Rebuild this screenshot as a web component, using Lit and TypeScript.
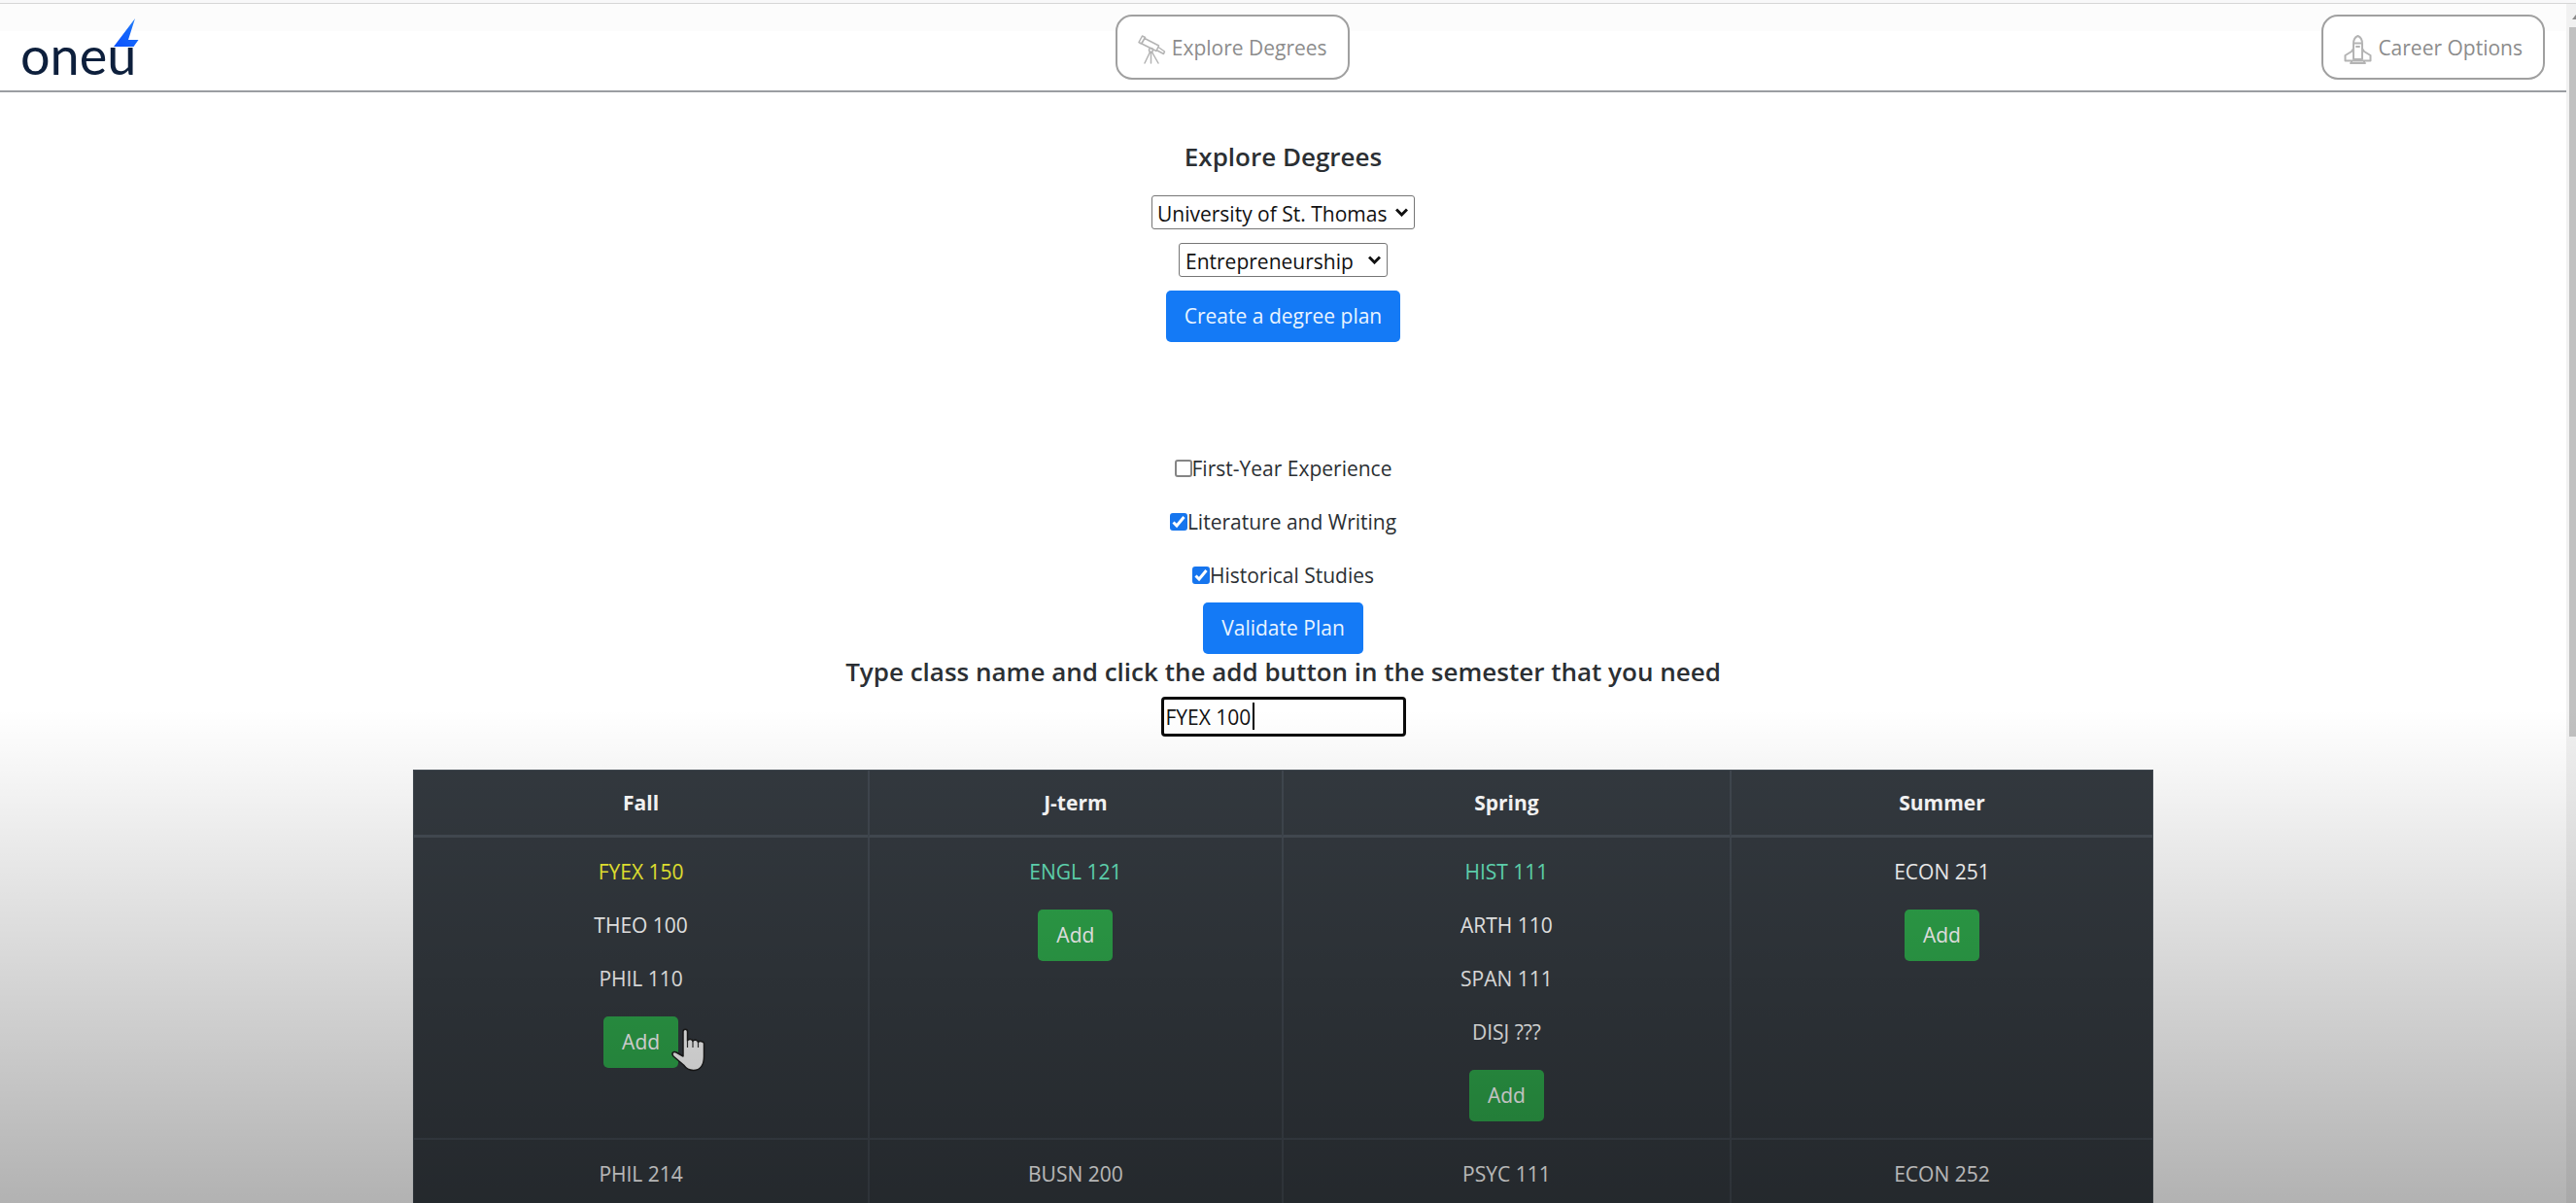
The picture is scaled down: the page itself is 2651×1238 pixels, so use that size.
import { LitElement, html, css, nothing } from "lit";
import { customElement, state } from "lit/decorators.js";
import { classMap } from "lit/directives/class-map.js";

type Course = { name: string; tone?: "pending" | "done" };
type Term = { courses: Course[]; add: boolean; pointer?: boolean };

const TERMS = ["Fall", "J-term", "Spring", "Summer"];

const YEARS: Term[][] = [
  [
    {
      courses: [{ name: "FYEX 150", tone: "pending" }, { name: "THEO 100" }, { name: "PHIL 110" }],
      add: true,
      pointer: true,
    },
    { courses: [{ name: "ENGL 121", tone: "done" }], add: true },
    {
      courses: [
        { name: "HIST 111", tone: "done" },
        { name: "ARTH 110" },
        { name: "SPAN 111" },
        { name: "DISJ ???" },
      ],
      add: true,
    },
    { courses: [{ name: "ECON 251" }], add: true },
  ],
  [
    { courses: [{ name: "PHIL 214" }], add: false },
    { courses: [{ name: "BUSN 200" }], add: false },
    { courses: [{ name: "PSYC 111" }], add: false },
    { courses: [{ name: "ECON 252" }], add: false },
  ],
];

@customElement("app-root")
export class AppRoot extends LitElement {
  @state() private requirements = [
    { id: "fye", label: "First-Year Experience", met: false },
    { id: "lit", label: "Literature and Writing", met: true },
    { id: "hist", label: "Historical Studies", met: true },
  ];

  static styles = css`
    :host {
      display: block;
      position: relative;
      height: 100vh;
      overflow: hidden;
      background: #fff;
      color: #2b2f33;
      font-family: "Open Sans", "Noto Sans", sans-serif;
      font-size: 21px;
      line-height: 33px;
    }
    * {
      box-sizing: border-box;
    }
    button,
    input,
    select {
      font: inherit;
      margin: 0;
    }
    .frame {
      display: flex;
      flex-direction: column;
      height: 100%;
    }
    .chrome-edge {
      flex: none;
      height: 4px;
      background: #f8f8f9;
      border-bottom: 1px solid #d6d6d6;
    }
    .viewport {
      flex: 1;
      min-height: 0;
      display: flex;
    }
    .page {
      flex: 1;
      min-width: 0;
      overflow: hidden;
    }
    .scrollbar {
      flex: none;
      width: 10px;
      background: #f1f1f1;
      padding: 24px 0 0 3px;
      position: relative;
    }
    .scroll-arrow {
      position: absolute;
      left: 6px;
      top: 11px;
      width: 8px;
      height: 5px;
    }
    .thumb {
      height: 60.3%;
      background: #c1c1c1;
    }
    .nav {
      display: flex;
      align-items: center;
      justify-content: space-between;
      height: 91px;
      padding: 0 22px 0 18px;
      border-bottom: 2px solid #9b9da2;
      background: linear-gradient(#fcfcfc 28px, #fff 28px);
    }
    .logo {
      display: block;
      width: 129px;
      height: 82px;
    }
    .logo-word {
      font-family: Lato, sans-serif;
      font-size: 54px;
      fill: #0d1f3c;
    }
    .nav-link {
      display: flex;
      align-items: center;
      gap: 6px;
      height: 67px;
      padding: 2px 21px 0;
      border: 2px solid #a0a0a0;
      border-radius: 17px;
      background: #fff;
      color: #8c8c8c;
      text-decoration: none;
      white-space: nowrap;
    }
    .nav-icon {
      width: 29px;
      height: 30px;
      fill: none;
      stroke: #b4b4b4;
      stroke-width: 1.5;
      stroke-linejoin: round;
      stroke-linecap: round;
      margin-top: 2px;
    }
    .nav-icon.heavy {
      stroke-width: 2;
    }
    .main {
      display: flex;
      flex-direction: column;
      align-items: center;
      padding-top: 50px;
    }
    .title {
      margin: 0;
      font-size: 26px;
      font-weight: 600;
      line-height: 32px;
    }
    .prompt {
      line-height: 36px;
    }
    .picker {
      display: grid;
      align-items: center;
      margin-top: 14px;
    }
    .title + .picker {
      margin-top: 24px;
    }
    .picker-select {
      grid-area: 1 / 1;
      appearance: none;
      height: 35px;
      padding: 2px 27px 0 5px;
      line-height: 30px;
      color: #111;
      background: #fff;
      border: 1px solid #767676;
      border-radius: 3px;
    }
    .picker-select.short {
      padding: 2px 34px 0 6px;
    }
    .picker-arrow {
      grid-area: 1 / 1;
      justify-self: end;
      width: 13px;
      height: 9px;
      margin-right: 7px;
      fill: none;
      stroke: #111;
      stroke-width: 3;
      pointer-events: none;
    }
    .btn {
      height: 53px;
      padding: 0 19px;
      border: 0;
      border-radius: 5px;
      color: #fff;
      white-space: nowrap;
    }
    .primary {
      background: #147af6;
      color: #e9f4ff;
    }
    .create {
      margin-top: 14px;
    }
    .checks {
      display: grid;
      justify-items: center;
      gap: 22px;
      margin: 114px 0 11px;
    }
    .check {
      display: flex;
      align-items: center;
    }
    .check-box {
      appearance: none;
      width: 18px;
      height: 18px;
      border: 2px solid #858585;
      border-radius: 3px;
      background: #fff;
      grid-area: 1 / 1;
    }
    .check-box:checked {
      background: #1675ee;
      border-color: #1675ee;
    }
    .box-wrap {
      display: grid;
      margin-bottom: 2px;
    }
    .tick {
      grid-area: 1 / 1;
      width: 18px;
      height: 18px;
      fill: none;
      stroke: #fff;
      stroke-width: 3;
      pointer-events: none;
    }
    .entry {
      position: relative;
      margin: 8px 0 34px;
    }
    .entry-input {
      display: block;
      width: 252px;
      height: 41px;
      padding: 0 2px;
      color: #111;
      background: #fff;
      border: 3px solid #0b0b0b;
      border-radius: 4px;
      outline: 0;
    }
    .caret {
      position: absolute;
      left: 94px;
      top: 6px;
      width: 2px;
      height: 28px;
      background: #000;
    }
    .plan {
      width: 67.8%;
      table-layout: fixed;
      border-collapse: separate;
      border-spacing: 0;
      background: #343a40;
      color: #fff;
      text-align: center;
      border: 1px solid #454d55;
    }
    .term-head {
      height: 69px;
      padding: 0;
      font-weight: 700;
      border-bottom: 3px solid #454d55;
    }
    .term-head:nth-child(1) {
      width: 26.1%;
    }
    .term-head:nth-child(2) {
      width: 23.8%;
    }
    .term-head:nth-child(3) {
      width: 25.8%;
    }
    .term-head + .term-head,
    .term + .term {
      border-left: 2px solid #414850;
    }
    .term {
      padding: 19px 0 17px;
      vertical-align: top;
      border-bottom: 2px solid #414850;
    }
    .later .term {
      height: 310px;
    }
    .course {
      margin: 0 0 22px;
    }
    .pending {
      color: #f4f433;
    }
    .done {
      color: #66e3bd;
    }
    .add-wrap {
      display: inline-block;
      position: relative;
      vertical-align: top;
    }
    .add {
      display: block;
      background: #2fa84c;
    }
    .pointer {
      position: absolute;
      left: 69px;
      top: 12px;
      width: 36px;
      height: 45px;
    }
    .shade {
      position: absolute;
      inset: 59% 0 0 0;
      background: linear-gradient(rgba(0, 0, 0, 0), rgba(0, 0, 0, 0.3));
      pointer-events: none;
    }
  `;

  private toggle(id: string) {
    this.requirements = this.requirements.map((r) => (r.id === id ? { ...r, met: !r.met } : r));
  }

  private arrow() {
    return html`<svg class="picker-arrow" viewBox="0 0 13 9" aria-hidden="true">
      <path d="M1 1.5 6.5 7 12 1.5" />
    </svg>`;
  }

  private renderTerm(term: Term) {
    return html`<td class="term">
      ${term.courses.map(
        (c) =>
          html`<p class=${classMap({ course: true, pending: c.tone === "pending", done: c.tone === "done" })}>
            ${c.name}
          </p>`,
      )}
      ${term.add
        ? html`<div class="add-wrap">
            <button class="btn add" type="button">Add</button>
            ${term.pointer
              ? html`<svg class="pointer" viewBox="0 0 36 45" aria-hidden="true">
                  <path
                    d="M13 3.500c0-3 4.500-3 4.500 0V13c1-2 5-2 5.500.5 1-2 5-1.500 5.500 1 1-1.500 6-1 6 1.500v13c0 9-4 14.500-11 14.500-5 0-7.500-2-10-5.500L3 29c-2.500-3 0-5.500 3-4l7 4z"
                    fill="#fff"
                    stroke="#1c1c1c"
                    stroke-width="1.500"
                    stroke-linejoin="round"
                  />
                  <path d="M17.500 13v7M23 14v6M28.500 15v5" stroke="#333" stroke-width="1.200" fill="none" />
                </svg>`
              : nothing}
          </div>`
        : nothing}
    </td>`;
  }

  render() {
    return html`
      <div class="frame">
        <div class="chrome-edge"></div>
        <div class="viewport">
          <div class="page">
            <header class="nav">
              <svg class="logo" viewBox="18 8 129 82" role="img" aria-label="oneu">
                <defs>
                  <linearGradient id="bolt" x1="0" y1="1" x2="1" y2="0">
                    <stop offset="0" stop-color="#0a50ff" />
                    <stop offset="0.600" stop-color="#1668fa" />
                    <stop offset="1" stop-color="#2f8cf5" />
                  </linearGradient>
                </defs>
                <text class="logo-word" x="21" y="77">oneu</text>
                <path d="M139 19 132 41h10.500L137.500 48H117z" fill="url(#bolt)" />
              </svg>
              <a class="nav-link" href="#degrees">
                <svg class="nav-icon" viewBox="0 0 29 30" aria-hidden="true">
                  <path d="M4.500 1 1 7.500l2.500 1.500L7.500 2.500zM7 3.500 21.500 11l-2.500 5.500L4 9zM21 12.500l6.500 4.500-1 2.500-6.500-3.500" />
                  <circle cx="13.500" cy="15.500" r="2" />
                  <path d="M12.500 17.500 7 29M13.500 17.500V29M14.500 17.500 21 29" />
                </svg>
                Explore Degrees
              </a>
              <a class="nav-link" href="#careers">
                <svg class="nav-icon heavy" viewBox="0 0 29 30" aria-hidden="true">
                  <path d="M10 25V9c0-4 2-7 4.500-8C17 2 19 5 19 9v16zM10 8.500h9M13 12h3" />
                  <path d="M10 14 8 17 1.500 21v5.500h26V21L21 17l-2-3M7 29h15M8 26.500V29M21 26.500V29" />
                </svg>
                Career Options
              </a>
            </header>
            <main class="main">
              <h1 class="title">Explore Degrees</h1>
              <div class="picker">
                <select class="picker-select" aria-label="University">
                  <option>University of St. Thomas</option>
                </select>
                ${this.arrow()}
              </div>
              <div class="picker">
                <select class="picker-select short" aria-label="Degree">
                  <option>Entrepreneurship</option>
                </select>
                ${this.arrow()}
              </div>
              <button class="btn primary create" type="button">Create a degree plan</button>
              <div class="checks">
                ${this.requirements.map(
                  (r) => html`<label class="check" for=${r.id}>
                    <span class="box-wrap">
                      <input
                        class="check-box"
                        type="checkbox"
                        id=${r.id}
                        .checked=${r.met}
                        @change=${() => this.toggle(r.id)}
                      />
                      ${r.met
                        ? html`<svg class="tick" viewBox="0 0 18 18" aria-hidden="true">
                            <path d="M3.500 9.500 7 13l7.500-9" />
                          </svg>`
                        : nothing}
                    </span>
                    ${r.label}
                  </label>`,
                )}
              </div>
              <button class="btn primary" type="button">Validate Plan</button>
              <h2 class="title prompt">Type class name and click the add button in the semester that you need</h2>
              <div class="entry">
                <input class="entry-input" type="text" aria-label="Class name" .value=${"FYEX 100"} />
                <span class="caret"></span>
              </div>
              <table class="plan">
                <thead>
                  <tr>
                    ${TERMS.map((t) => html`<th class="term-head" scope="col">${t}</th>`)}
                  </tr>
                </thead>
                <tbody>
                  ${YEARS.map(
                    (year, i) => html`<tr class=${classMap({ later: i > 0 })}>
                      ${year.map((term) => this.renderTerm(term))}
                    </tr>`,
                  )}
                </tbody>
              </table>
            </main>
          </div>
          <div class="scrollbar">
            <svg class="scroll-arrow" viewBox="0 0 8 5" aria-hidden="true">
              <path d="M0 5 4 0l4 5z" fill="#8a8a8a" />
            </svg>
            <div class="thumb"></div>
          </div>
        </div>
      </div>
      <div class="shade"></div>
    `;
  }
}
